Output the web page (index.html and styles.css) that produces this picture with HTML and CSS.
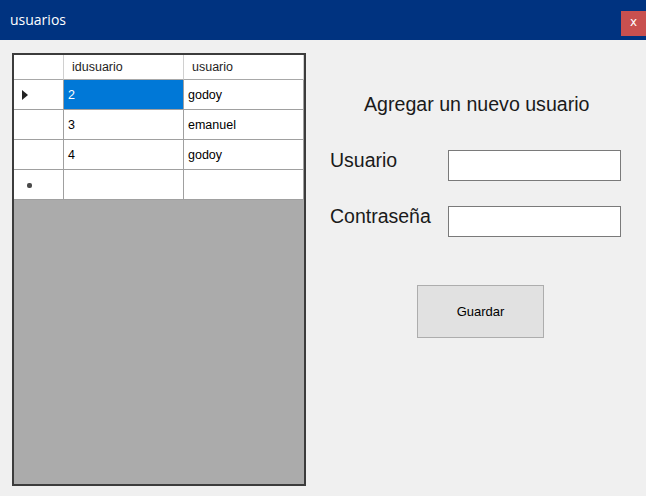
FILE: index.html
```html
<!DOCTYPE html>
<html lang="es">
<head>
<meta charset="utf-8">
<title>usuarios</title>
<link rel="stylesheet" href="styles.css">
</head>
<body>
<div class="window">
  <div class="titlebar">
    <span class="title">usuarios</span>
    <span class="close">x</span>
  </div>
  <div class="content">
    <div class="grid">
      <div class="row header">
        <div class="cell rh"></div>
        <div class="cell">idusuario</div>
        <div class="cell">usuario</div>
      </div>
      <div class="row">
        <div class="cell rh"><span class="arrow"></span></div>
        <div class="cell selected">2</div>
        <div class="cell">godoy</div>
      </div>
      <div class="row">
        <div class="cell rh"></div>
        <div class="cell">3</div>
        <div class="cell">emanuel</div>
      </div>
      <div class="row">
        <div class="cell rh"></div>
        <div class="cell">4</div>
        <div class="cell">godoy</div>
      </div>
      <div class="row">
        <div class="cell rh"><span class="newrow"></span></div>
        <div class="cell"></div>
        <div class="cell"></div>
      </div>
    </div>
    <div class="form">
      <h1 class="heading">Agregar un nuevo usuario</h1>
      <div class="field first">
        <label class="label">Usuario</label>
        <input class="input" type="text">
      </div>
      <div class="field second">
        <label class="label">Contraseña</label>
        <input class="input" type="password">
      </div>
      <button class="button">Guardar</button>
    </div>
  </div>
</div>
</body>
</html>
```
FILE: styles.css
```css
html, body {
  margin: 0;
  padding: 0;
}
body {
  width: 646px;
  height: 496px;
  overflow: hidden;
  background: #f0f0f0;
  font-family: "Liberation Sans", Arial, sans-serif;
  color: #000;
}
.titlebar {
  height: 40px;
  background: #003380;
  display: flex;
  justify-content: space-between;
  align-items: flex-start;
}
.title {
  font-family: "Open Sans", "Noto Sans", sans-serif;
  font-size: 14px;
  line-height: 20px;
  color: #fff;
  margin: 10px 0 0 10px;
}
.close {
  width: 25px;
  height: 25px;
  margin-top: 11px;
  background: #c9504f;
  color: #fff;
  font-family: "DejaVu Sans", sans-serif;
  font-size: 12px;
  line-height: 23px;
  text-align: center;
}
.content {
  display: flex;
  align-items: flex-start;
  padding: 13px 0 0 12px;
}
.grid {
  width: 294px;
  height: 433px;
  box-sizing: border-box;
  border: 2px solid #3c3c3c;
  background: #ababab;
}
.row {
  display: grid;
  grid-template-columns: 50px 120px 120px;
  height: 30px;
}
.row.header {
  height: 25px;
}
.cell {
  box-sizing: border-box;
  background: #fff;
  border-right: 1px solid #a0a0a0;
  border-bottom: 1px solid #a0a0a0;
  display: flex;
  align-items: center;
  padding-left: 4px;
  font-size: 12.5px;
  color: #000;
}
.header .cell {
  padding-left: 8px;
  color: #1e1e1e;
  border-right-color: #d0d0d0;
  border-bottom-color: #a8a8a8;
}
.cell.rh {
  padding-left: 8px;
}
.cell.selected {
  background: #0078d7;
  color: #fff;
}
.arrow {
  width: 0;
  height: 0;
  border-top: 5px solid transparent;
  border-bottom: 5px solid transparent;
  border-left: 6px solid #222;
}
.newrow {
  width: 5px;
  height: 5px;
  border-radius: 2px;
  background: #4a4a4a;
  margin: 2px 0 0 5px;
}
.form {
  margin: 41px 0 0 24px;
  display: flex;
  flex-direction: column;
  align-items: flex-start;
}
.heading {
  margin: 0 0 0 34px;
  font-size: 19.6px;
  line-height: 20px;
  font-weight: normal;
  color: #1a1a1a;
}
.field {
  display: flex;
  align-items: flex-start;
}
.field.first {
  margin-top: 36px;
}
.field.second {
  margin-top: 25px;
}
.label {
  width: 118px;
  font-size: 19.5px;
  line-height: 20px;
  color: #1a1a1a;
}
.input {
  width: 173px;
  height: 31px;
  box-sizing: border-box;
  border: 1px solid #7a7a7a;
  background: #fff;
  margin: 0;
  padding: 0;
}
.button {
  margin: 48px 0 0 87px;
  width: 127px;
  height: 53px;
  box-sizing: border-box;
  background: #e1e1e1;
  border: 1px solid #adadad;
  font-family: "Liberation Sans", Arial, sans-serif;
  font-size: 13px;
  color: #000;
  padding: 0;
}
```
